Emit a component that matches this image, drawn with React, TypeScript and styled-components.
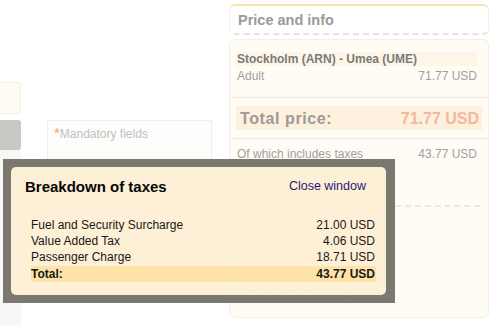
import React from 'react';
import styled, {createGlobalStyle} from 'styled-components';

const GlobalStyle = createGlobalStyle`
  html, body {
    margin: 0;
    padding: 0;
    background: #ffffff;
  }
  body {
    font-family: 'Liberation Sans', Arial, sans-serif;
  }
`;

const Page = styled.div`
  position: relative;
  width: 493px;
  height: 325px;
  overflow: hidden;
  display: flex;
  align-items: flex-start;
  background: #ffffff;
`;

const LeftStrip = styled.div`
  width: 21px;
  height: 325px;
  display: flex;
  flex-direction: column;
  padding-top: 82px;
  box-sizing: border-box;
`;

const StubBox = styled.div<{$tone: 'cream' | 'gray'}>`
  height: ${(p) => (p.$tone === 'cream' ? '32px' : '30px')};
  margin-bottom: ${(p) => (p.$tone === 'cream' ? '6px' : '0')};
  box-sizing: border-box;
  background: ${(p) => (p.$tone === 'cream' ? '#fffbf3' : '#c8c8c4')};
  border: 1px solid ${(p) => (p.$tone === 'cream' ? '#f6efdf' : '#c8c8c4')};
  border-left: none;
  border-radius: 0 3px 3px 0;
`;

const StubRest = styled.div`
  flex: 1;
  background: #f7f7f5;
`;

const Mandatory = styled.div`
  margin: 120px 0 0 26px;
  width: 165px;
  height: 70px;
  box-sizing: border-box;
  background: #fdfdfb;
  border: 1px solid #efefea;
  padding: 5px 6px;
  font-size: 12px;
  color: #c0c0be;
  display: flex;
  align-items: flex-start;
`;

const Star = styled.span`
  color: #f0a27a;
  font-size: 15px;
  line-height: 12px;
  margin-top: 1px;
`;

const MandatoryText = styled.span`
  line-height: 14px;
  margin-top: 1px;
`;

const RightPanel = styled.div`
  margin: 4px 0 0 17px;
  width: 260px;
  display: flex;
  flex-direction: column;
`;

const HeaderCard = styled.div`
  height: 31px;
  box-sizing: border-box;
  border-top: 2px solid #f8e4a8;
  border-left: 1px solid #f3f1ec;
  border-right: 1px solid #f3f1ec;
  border-bottom: 2px dashed #e6e4df;
  border-radius: 6px;
  padding: 6px 8px 0;
  font-size: 14.5px;
  font-weight: bold;
  color: #9a9a98;
`;

const BodyCard = styled.div`
  margin-top: 4px;
  height: 279px;
  box-sizing: border-box;
  background: #fffcf6;
  border: 1px solid #f3efe5;
  border-radius: 6px;
  display: flex;
  flex-direction: column;
`;

const Route = styled.div`
  padding: 12px 11px 14px 6px;
`;

const RouteTitle = styled.div`
  background: #fdf6e7;
  padding-left: 1px;
  font-size: 12px;
  font-weight: bold;
  line-height: 14px;
  color: #7a7a78;
`;

const Line = styled.div<{$muted?: boolean}>`
  display: flex;
  justify-content: space-between;
  margin-top: ${(p) => (p.$muted ? '0' : '3px')};
  padding-left: 1px;
  font-size: 12px;
  line-height: 14px;
  color: #a0a09e;
`;

const Separator = styled.div`
  margin: 0 1px;
  border-top: 1px solid #eee9de;
`;

const TotalBox = styled.div`
  margin: 8px 6px 8px 6px;
  height: 24px;
  background: #fdf0dc;
  display: flex;
  align-items: center;
  justify-content: space-between;
  padding: 1px 3px 0 4px;
  box-sizing: border-box;
  font-size: 16px;
  font-weight: bold;
`;

const TotalLabel = styled.span`
  color: #9b9b98;
  letter-spacing: 0.6px;
`;

const TotalValue = styled.span`
  color: #f2b8a2;
`;

const Taxes = styled.div`
  padding: 8px 11px 0 6px;
`;

const Dashed = styled.div`
  margin: 44px 8px 0 8px;
  border-top: 2px dashed #ebe8e2;
`;

const FareRules = styled.div`
  margin: 77px 0 0 16px;
  font-size: 12px;
  color: #bdbcb6;
`;

const Overlay = styled.div`
  position: absolute;
  left: 3px;
  top: 159px;
  width: 392px;
  height: 144px;
  box-sizing: border-box;
  padding: 8px 9px 8px 8px;
  background: #76756c;
  opacity: 0.97;
`;

const Dialog = styled.div`
  height: 100%;
  box-sizing: border-box;
  background: #fef0d5;
  border-radius: 5px;
  padding: 10px 10px 0 14px;
`;

const DialogHead = styled.div`
  display: flex;
  justify-content: space-between;
  align-items: center;
  height: 18px;
`;

const DialogTitle = styled.div`
  font-size: 15px;
  font-weight: bold;
  color: #000000;
`;

const CloseLink = styled.a`
  font-size: 12.5px;
  color: #1c1270;
  text-decoration: none;
  margin-right: 10px;
  cursor: pointer;
`;

const TaxTable = styled.div`
  margin: 22px 0 0 6px;
`;

const TaxRow = styled.div<{$total?: boolean}>`
  display: flex;
  justify-content: space-between;
  height: 16px;
  line-height: 16px;
  padding-right: 1px;
  font-size: 12px;
  color: #111111;
  background: ${(p) => (p.$total ? '#fde3a6' : 'transparent')};
  font-weight: ${(p) => (p.$total ? 'bold' : 'normal')};
  margin-top: ${(p) => (p.$total ? '1px' : '0')};
`;

const taxes = [
  {label: 'Fuel and Security Surcharge', value: '21.00 USD'},
  {label: 'Value Added Tax', value: '4.06 USD'},
  {label: 'Passenger Charge', value: '18.71 USD'},
];

function App() {
  return (
    <>
      <GlobalStyle />
      <Page>
        <LeftStrip>
          <StubBox $tone="cream" />
          <StubBox $tone="gray" />
          <StubRest />
        </LeftStrip>
        <Mandatory>
          <Star>*</Star>
          <MandatoryText>Mandatory fields</MandatoryText>
        </Mandatory>
        <RightPanel>
          <HeaderCard>Price and info</HeaderCard>
          <BodyCard>
            <Route>
              <RouteTitle>Stockholm (ARN) - Umea (UME)</RouteTitle>
              <Line>
                <span>Adult</span>
                <span>71.77 USD</span>
              </Line>
            </Route>
            <Separator />
            <TotalBox>
              <TotalLabel>Total price:</TotalLabel>
              <TotalValue>71.77 USD</TotalValue>
            </TotalBox>
            <Separator />
            <Taxes>
              <Line $muted>
                <span>Of which includes taxes</span>
                <span>43.77 USD</span>
              </Line>
            </Taxes>
            <Dashed />
            <FareRules>Fare rules Economy</FareRules>
          </BodyCard>
        </RightPanel>
        <Overlay>
          <Dialog>
            <DialogHead>
              <DialogTitle>Breakdown of taxes</DialogTitle>
              <CloseLink>Close window</CloseLink>
            </DialogHead>
            <TaxTable>
              {taxes.map((t) => (
                <TaxRow key={t.label}>
                  <span>{t.label}</span>
                  <span>{t.value}</span>
                </TaxRow>
              ))}
              <TaxRow $total>
                <span>Total:</span>
                <span>43.77 USD</span>
              </TaxRow>
            </TaxTable>
          </Dialog>
        </Overlay>
      </Page>
    </>
  );
}

export default App;
